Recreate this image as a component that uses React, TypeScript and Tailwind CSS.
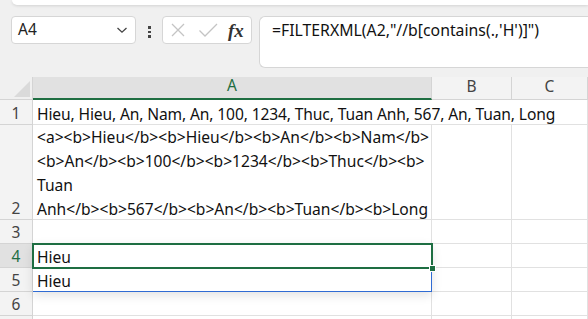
import React from "react";

const GREEN = "#1e6e42";

function RowHead({ n, active }: { n?: number; active?: boolean }) {
  return (
    <div
      className={`flex items-end justify-center border-r border-b border-[#d4d4d4] text-[15.5px] leading-[24px] ${
        active ? "bg-[#e1e1e1] text-[#1e6e42]" : "bg-[#f3f3f3] text-[#444]"
      }`}
    >
      <span className="relative top-[1px]">{n}</span>
    </div>
  );
}

function Cell({ children, noRight, over }: { children?: React.ReactNode; noRight?: boolean; over?: boolean }) {
  return (
    <div
      className={`flex items-end whitespace-nowrap border-b bg-white px-[4px] text-[15.6px] leading-[24px] text-[#111] border-[#e1e1e1] ${
        noRight ? "" : "border-r"
      } ${over ? "relative z-10 tracking-[-0.13px]" : "overflow-hidden"}`}
    >
      <div className="relative top-[2px]">{children}</div>
    </div>
  );
}

export default function App() {
  const rows = [
    { n: 1, a: "Hieu, Hieu, An, Nam, An, 100, 1234, Thuc, Tuan Anh, 567, An, Tuan, Long", h: 25 },
    {
      n: 2,
      a: (
        <div className="flex flex-col">
          <span>{"<a><b>Hieu</b><b>Hieu</b><b>An</b><b>Nam</b>"}</span>
          <span>{"<b>An</b><b>100</b><b>1234</b><b>Thuc</b><b>"}</span>
          <span>Tuan</span>
          <span>{"Anh</b><b>567</b><b>An</b><b>Tuan</b><b>Long"}</span>
        </div>
      ),
      h: 95,
    },
    { n: 3, a: "", h: 24 },
    { n: 4, a: "Hieu", h: 24 },
    { n: 5, a: "Hieu", h: 24 },
    { n: 6, a: "", h: 24 },
    { n: 0, a: "", h: 24 },
  ];

  return (
    <div
      className="relative h-[319px] w-[588px] overflow-hidden bg-[#f0f0f0]"
      style={{ fontFamily: '"Noto Sans", "Open Sans", sans-serif' }}
    >
      {/* ribbon edge */}
      <div className="ml-[12px] h-[5px] rounded-bl-[6px] bg-white shadow-[0_1px_3px_rgba(0,0,0,0.12)]" />

      {/* formula bar row */}
      <div className="mt-[11px] flex items-start">
        <div className="ml-[11px] flex h-[28px] w-[125px] items-center justify-between rounded-[4px] border border-[#d6d6d6] bg-white pl-[6px] pr-[7px] text-[15.5px] text-[#222]">
          <span>A4</span>
          <svg width="12" height="8" viewBox="0 0 12 8" fill="none" stroke="#444" strokeWidth="1.3">
            <path d="M1.5 2 L6 6.2 L10.5 2" />
          </svg>
        </div>
        <div className="ml-[12px] mt-[10px] flex flex-col gap-[2px]">
          <div className="h-[2.5px] w-[3px] bg-[#444]" />
          <div className="h-[2.5px] w-[3px] bg-[#444]" />
          <div className="h-[2.5px] w-[3px] bg-[#444]" />
        </div>
        <div className="ml-[11px] flex h-[28px] w-[90px] items-center rounded-[4px] border border-[#d6d6d6] bg-white pl-[7px]">
          <svg width="16" height="16" viewBox="0 0 16 16" stroke="#c4c4c4" strokeWidth="1.3" fill="none">
            <path d="M2 2 L14 14 M14 2 L2 14" />
          </svg>
          <svg className="ml-[12px]" width="20" height="16" viewBox="0 0 20 16" stroke="#c4c4c4" strokeWidth="1.3" fill="none">
            <path d="M1.5 8.5 L7 14 L19 2" />
          </svg>
          <span
            className="ml-[10px] text-[19px] font-bold italic leading-none text-[#333]"
            style={{ fontFamily: '"Liberation Serif", "DejaVu Serif", serif' }}
          >
            fx
          </span>
        </div>
        <div className="ml-[7px] h-[52px] flex-1 rounded-l-[6px] border border-r-0 border-[#d6d6d6] bg-white pl-[12px] pt-[3px] text-[15.8px] leading-[20px] text-[#111]">
          =FILTERXML(A2,"//b[contains(.,'H')]")
        </div>
      </div>

      {/* grid */}
      <div className="relative mt-[9px]">
        <div
          className="grid"
          style={{
            gridTemplateColumns: "33px 399px 80px 1fr",
            gridTemplateRows: `23px ${rows.map((r) => r.h + "px").join(" ")}`,
          }}
        >
          <div className="relative border-r border-b border-[#d4d4d4] bg-[#f0f0f0]">
            <div className="absolute bottom-[2px] right-[2px] h-0 w-0 border-b-[16px] border-l-[16px] border-b-[#dadada] border-l-transparent" />
          </div>
          <div className="flex items-end justify-center border-r border-[#d4d4d4] border-b-2 border-b-[#1e6e42] bg-[#e1e1e1] pb-[1px] text-[15.5px] text-[#1e6e42]">
            A
          </div>
          <div className="flex items-end justify-center border-r border-b border-[#d4d4d4] bg-[#f3f3f3] pb-[1px] text-[15.5px] text-[#444]">
            B
          </div>
          <div className="flex items-end justify-center border-r border-b border-[#d4d4d4] bg-[#f3f3f3] pb-[1px] text-[15.5px] text-[#444]">
            C
          </div>
          {rows.map((r) => (
            <React.Fragment key={r.h + "-" + r.n}>
              <RowHead n={r.n || undefined} active={r.n === 4} />
              <Cell over={r.n === 1} noRight={r.n === 1}>{r.a}</Cell>
              <Cell noRight={r.n === 1} />
              <Cell />
            </React.Fragment>
          ))}
        </div>

        {/* spill range + selection */}
        <div className="absolute left-[33px] top-[167px] h-[48px] w-[399px] border-r border-b border-[#2f6bd3] shadow-[0_3px_10px_rgba(0,0,0,0.12)]" />
        <div className="absolute left-[32px] top-[166px] h-[26px] w-[401px] border-2" style={{ borderColor: GREEN }} />
        <div className="absolute left-[429px] top-[188px] h-[7px] w-[7px] border border-white" style={{ backgroundColor: GREEN }} />
      </div>
    </div>
  );
}
